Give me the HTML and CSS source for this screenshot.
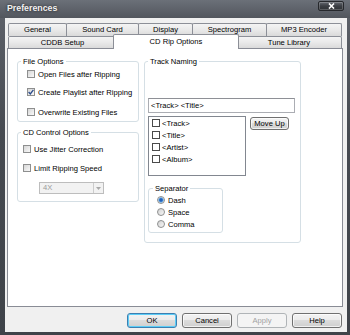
FILE: index.html
```html
<!DOCTYPE html>
<html lang="en">

<head>
  <meta charset="UTF-8">
  <title>Preferences</title>
  <link rel="stylesheet" href="styles.css">
</head>

<body>
  <div class="window">
    <div class="titlebar">
      <span class="title">Preferences</span>
      <span class="close">
        <svg width="7" height="6" viewBox="0 0 7 6"><path d="M1 0.5 L6 5.5 M6 0.5 L1 5.5" stroke="#fff" stroke-width="1.6" fill="none"/></svg>
      </span>
    </div>

    <div class="client">
      <div class="tabs">
        <div class="tab-row">
          <div class="tab tab-general">General</div>
          <div class="tab tab-sound">Sound Card</div>
          <div class="tab tab-display">Display</div>
          <div class="tab tab-spectro">Spectrogram</div>
          <div class="tab tab-mp3">MP3 Encoder</div>
        </div>
        <div class="tab-row second">
          <div class="tab tab-cddb">CDDB Setup</div>
          <div class="tab tab-rip selected">CD Rip Options</div>
          <div class="tab tab-tune">Tune Library</div>
        </div>
      </div>

      <div class="panel">
        <div class="col-left">
          <fieldset class="group file-options">
            <legend>File Options</legend>
            <div class="group-body">
              <div class="check-row"><span class="box"></span>Open Files after Ripping</div>
              <div class="check-row row-2">
                <span class="box">
                  <svg width="6" height="6" viewBox="0 0 6 6"><path d="M0.6 3 L2.3 4.9 L5.4 0.8" stroke="#2b4c8c" stroke-width="1.3" fill="none"/></svg>
                </span>Create Playlist after Ripping
              </div>
              <div class="check-row row-3"><span class="box"></span>Overwrite Existing Files</div>
            </div>
          </fieldset>

          <fieldset class="group cd-control">
            <legend>CD Control Options</legend>
            <div class="group-body">
              <div class="check-row"><span class="box"></span>Use Jitter Correction</div>
              <div class="check-row row-2"><span class="box"></span>Limit Ripping Speed</div>
              <div class="dropdown">
                <span class="dropdown-text">4X</span>
                <span class="dropdown-arrow">
                  <svg width="5" height="3" viewBox="0 0 5 3"><path d="M0 0 L5 0 L2.5 3 Z" fill="#a8a8a8"/></svg>
                </span>
              </div>
            </div>
          </fieldset>
        </div>

        <div class="col-right">
          <fieldset class="group track-naming">
            <legend>Track Naming</legend>
            <div class="group-body">
              <div class="textbox">&lt;Track&gt; &lt;Title&gt;</div>
              <div class="list-row">
                <div class="listbox">
                  <div class="list-item"><span class="flat-box"></span>&lt;Track&gt;</div>
                  <div class="list-item"><span class="flat-box"></span>&lt;Title&gt;</div>
                  <div class="list-item"><span class="flat-box"></span>&lt;Artist&gt;</div>
                  <div class="list-item"><span class="flat-box"></span>&lt;Album&gt;</div>
                </div>
                <div class="button move-up">Move Up</div>
              </div>

              <fieldset class="group separator">
                <legend>Separator</legend>
                <div class="group-body">
                  <div class="radio-row"><span class="radio on"></span>Dash</div>
                  <div class="radio-row"><span class="radio"></span>Space</div>
                  <div class="radio-row"><span class="radio"></span>Comma</div>
                </div>
              </fieldset>
            </div>
          </fieldset>
        </div>
      </div>

      <div class="buttons">
        <div class="button default">OK</div>
        <div class="button">Cancel</div>
        <div class="button disabled">Apply</div>
        <div class="button">Help</div>
      </div>
    </div>
  </div>
</body>

</html>
```

FILE: styles.css
```css
* {
  box-sizing: border-box;
}

body {
  margin: 0;
  font-family: "Liberation Sans", Arial, sans-serif;
  font-size: 7.6px;
  color: #000;
}

/* window frame */
.window {
  width: 350px;
  height: 335px;
  display: flex;
  flex-direction: column;
  background: linear-gradient(#5f636b, #464a51 40%, #3f4349);
}

.titlebar {
  height: 18px;
  flex: none;
  display: flex;
  justify-content: space-between;
  align-items: flex-start;
  padding: 0 6px 0 7px;
  background: linear-gradient(#6b7078, #52565d);
}

.title {
  font-size: 8.8px;
  font-weight: bold;
  line-height: 17px;
  color: #f2f2f2;
  text-shadow: 0 0 3px rgba(0, 0, 0, 0.7);
}

.close {
  margin-top: 1px;
  width: 26px;
  height: 10px;
  display: flex;
  align-items: center;
  justify-content: center;
  border: 1px solid #26282c;
  border-radius: 2px;
  background: linear-gradient(#666a71, #3b3e43 50%, #2f3236);
  box-shadow: inset 0 0 0 1px rgba(255, 255, 255, 0.2);
}

.client {
  flex: 1;
  margin: 0 3px 3px 5px;
  padding-top: 5px;
  background: #f0f0f0;
  display: flex;
  flex-direction: column;
}

/* tabs */
.tabs {
  margin-left: 3px;
  width: 334px;
}

.tab-row {
  display: flex;
  height: 13px;
}

.tab-row.second {
  height: 12px;
}

.tab {
  flex: none;
  height: 100%;
  margin-left: -1px;
  border: 1px solid #8c8f97;
  border-bottom: none;
  border-radius: 2px 2px 0 0;
  background: linear-gradient(#f4f4f4, #e9e9e9 50%, #dadada);
  text-align: center;
  line-height: 12px;
}

.tab-general { width: 59px; margin-left: 0; }
.tab-sound { width: 73px; }
.tab-display { width: 55px; }
.tab-spectro { width: 75px; }
.tab-mp3 { width: 76px; }
.tab-cddb { width: 109px; margin-left: 0; }
.tab-tune { width: 106px; }

.tab-rip {
  width: 126px;
}

.tab.selected {
  position: relative;
  z-index: 1;
  height: 15px;
  margin: -2px -2px 0 -4px;
  background: #fff;
  line-height: 13px;
}

/* tab page */
.panel {
  margin-left: 2px;
  width: 336px;
  height: 259px;
  flex: none;
  border: 1px solid #898c95;
  background: #fff;
  display: flex;
  align-items: flex-start;
  gap: 5px;
  padding: 8px 0 0 9px;
}

.col-left {
  width: 122px;
}

.col-right {
  width: 157px;
}

.group {
  margin: 0;
  padding: 0;
  min-width: 0;
  border: 1px solid #d5dfe5;
  border-radius: 3px;
}

.group legend {
  padding: 0 2px;
  margin-left: 3px;
  line-height: 9px;
}

.file-options .group-body {
  padding: 3px 0 4px 9px;
}

.cd-control {
  margin-top: 6px;
}

.cd-control .group-body {
  padding: 7px 0 7px 5px;
}

.check-row {
  display: flex;
  align-items: center;
  gap: 3px;
  height: 10px;
  white-space: nowrap;
}

.file-options .row-2 { margin-top: 8px; }
.file-options .row-3 { margin-top: 10px; }
.cd-control .row-2 { margin-top: 9px; }

.box {
  width: 8px;
  height: 8px;
  flex: none;
  display: flex;
  align-items: center;
  justify-content: center;
  border: 1px solid #8e8f8f;
  background: linear-gradient(135deg, #d6d6d6, #f9f9f9);
}

.dropdown {
  margin: 9px 0 0 16px;
  width: 65px;
  height: 12px;
  display: flex;
  border: 1px solid #bdbdbd;
  background: #f2f2f2;
}

.dropdown-text {
  flex: 1;
  padding-left: 3px;
  line-height: 10px;
  color: #9c9c9c;
}

.dropdown-arrow {
  width: 10px;
  display: flex;
  align-items: center;
  justify-content: center;
  border-left: 1px solid #cccccc;
}

/* track naming */
.track-naming legend {
  margin-left: 3px;
}

.track-naming > .group-body {
  padding: 32px 0 9px 3px;
}

.textbox {
  width: 147px;
  height: 15px;
  border: 1px solid #abadb3;
  border-top-color: #8e9096;
  padding-left: 2px;
  line-height: 13px;
  background: #fff;
}

.list-row {
  display: flex;
  align-items: flex-start;
  margin-top: 3px;
}

.listbox {
  width: 98px;
  height: 60px;
  border: 1px solid #828790;
  padding-left: 3px;
}

.list-item {
  display: flex;
  align-items: center;
  gap: 2px;
  height: 12px;
}

.flat-box {
  width: 8px;
  height: 8px;
  border: 1px solid #4a4a4a;
  background: #fff;
}

.separator {
  width: 75px;
  margin-top: 8px;
}

.separator legend {
  margin-left: 4px;
}

.separator .group-body {
  padding: 1px 0 2px 8px;
}

.radio-row {
  display: flex;
  align-items: center;
  gap: 3px;
  height: 12px;
}

.radio {
  width: 8px;
  height: 8px;
  border: 1px solid #8e8f8f;
  border-radius: 50%;
  background: linear-gradient(135deg, #d2d2d2, #f7f7f7);
}

.radio.on {
  background: radial-gradient(circle, #1d58b0 0, #2a6cc4 1.4px, #8cc4f0 2.5px, #e4e4e4 3px);
}

/* buttons */
.button {
  width: 50px;
  height: 15px;
  border: 1px solid #707070;
  border-radius: 3px;
  background: linear-gradient(#f3f3f3, #ebebeb 50%, #dcdcdc 50%, #cfcfcf);
  box-shadow: inset 0 0 0 1px rgba(255, 255, 255, 0.7);
  text-align: center;
  line-height: 13px;
}

.move-up {
  width: 39px;
  height: 13px;
  margin: 1px 0 0 4px;
  line-height: 11px;
}

.buttons {
  display: flex;
  justify-content: flex-end;
  gap: 5px;
  margin-top: 6px;
  padding-right: 5px;
}

.button.default {
  border-color: #3c7fb1;
  box-shadow: inset 0 0 0 1px #5ccdf7;
}

.button.disabled {
  border-color: #b0b4b7;
  background: #f4f4f4;
  box-shadow: none;
  color: #a2a2a2;
}
```
